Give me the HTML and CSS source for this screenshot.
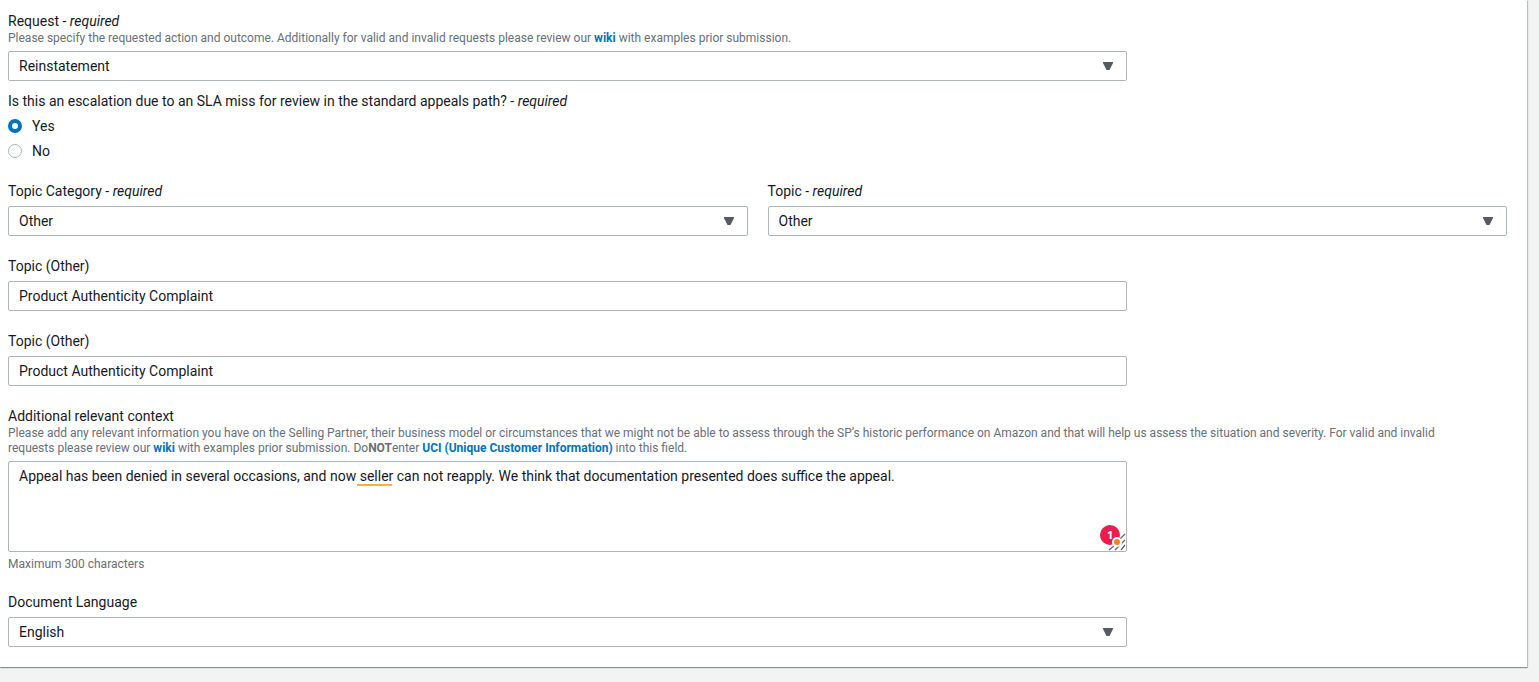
FILE: index.html
```html
<!DOCTYPE html>
<html lang="en">
<head>
<meta charset="utf-8">
<title>Appeal escalation request</title>
<link rel="stylesheet" href="styles.css">
</head>
<body>
<main class="panel">
<form class="form">
  <div class="field">
    <label class="label" for="request">Request - <em>required</em></label>
    <p class="hint">Please specify the requested action and outcome. Additionally for valid and invalid requests please review our <a href="#wiki">wiki</a> with examples prior submission.</p>
    <div class="control narrow">
      <select class="box" id="request"><option>Reinstatement</option></select>
      <svg class="arrow" viewBox="0 0 12 10" aria-hidden="true"><path d="M1 1h10v1L7.5 9h-3L1 2z"/></svg>
    </div>
  </div>

  <fieldset class="choices">
    <legend class="label">Is this an escalation due to an SLA miss for review in the standard appeals path? - <em>required</em></legend>
    <label class="choice"><input type="radio" name="sla" checked>Yes</label>
    <label class="choice"><input type="radio" name="sla">No</label>
  </fieldset>

  <div class="columns">
    <div class="field">
      <label class="label" for="category">Topic Category - <em>required</em></label>
      <div class="control">
        <select class="box" id="category"><option>Other</option></select>
        <svg class="arrow" viewBox="0 0 12 10" aria-hidden="true"><path d="M1 1h10v1L7.5 9h-3L1 2z"/></svg>
      </div>
    </div>
    <div class="field">
      <label class="label" for="topic">Topic - <em>required</em></label>
      <div class="control">
        <select class="box" id="topic"><option>Other</option></select>
        <svg class="arrow" viewBox="0 0 12 10" aria-hidden="true"><path d="M1 1h10v1L7.5 9h-3L1 2z"/></svg>
      </div>
    </div>
  </div>

  <div class="field">
    <label class="label" for="other-category">Topic (Other)</label>
    <div class="control narrow"><input class="box" id="other-category" type="text" value="Product Authenticity Complaint"></div>
  </div>

  <div class="field">
    <label class="label" for="other-topic">Topic (Other)</label>
    <div class="control narrow"><input class="box" id="other-topic" type="text" value="Product Authenticity Complaint"></div>
  </div>

  <div class="field">
    <label class="label" for="context">Additional relevant context</label>
    <p class="hint">Please add any relevant information you have on the Selling Partner, their business model or circumstances that we might not be able to assess through the SP’s historic performance on Amazon and that will help us assess the situation and severity. For valid and invalid requests please review our <a href="#wiki">wiki</a> with examples prior submission. Do<b>NOT</b>enter <a href="#uci">UCI (Unique Customer Information)</a> into this field.</p>
    <div class="control narrow">
      <textarea class="box area" id="context" spellcheck="false">Appeal has been denied in several occasions, and now seller can not reapply. We think that documentation presented does suffice the appeal.</textarea>
      <span class="flagged-word"></span>
      <svg class="grip" viewBox="0 0 18 18" aria-hidden="true"><path d="M1 17l5-4M7 17l4-4M13 17l4-5M12 6l5-5M13 11l4-4"/></svg>
      <button class="checker" type="button" aria-label="1 writing suggestion">1<span class="checker-dot"></span></button>
    </div>
    <p class="hint constraint">Maximum 300 characters</p>
  </div>

  <div class="field">
    <label class="label" for="language">Document Language</label>
    <div class="control narrow">
      <select class="box" id="language"><option>English</option></select>
      <svg class="arrow" viewBox="0 0 12 10" aria-hidden="true"><path d="M1 1h10v1L7.5 9h-3L1 2z"/></svg>
    </div>
  </div>
</form>
</main>
</body>
</html>
```
FILE: styles.css
```css
* { box-sizing: border-box; }

body {
  margin: 0;
  padding: 0 12px 14px 0;
  background: #f2f3f3;
  color: #16191f;
  font: 14px/20px Roboto, "Noto Sans", sans-serif;
}

.panel {
  padding: 11px 20px 20px 8px;
  background: #fff;
  box-shadow: 0 1px 1px rgba(0, 28, 36, 0.3), 1px 1px 1px rgba(0, 28, 36, 0.2);
}

.form {
  display: flex;
  flex-direction: column;
  gap: 20px;
}

.field { min-width: 0; }

.label {
  display: block;
  padding: 0;
}

.hint {
  margin: 0;
  padding-right: 40px;
  color: #687078;
  font-size: 12px;
  line-height: 15px;
}

.hint a {
  color: #0073bb;
  font-weight: 700;
  text-decoration: none;
}

.control {
  position: relative;
  margin-top: 5px;
}

.narrow { width: calc(75% - 5px); }

.box {
  display: block;
  width: 100%;
  height: 30px;
  margin: 0;
  padding: 4px 10px;
  border: 1px solid #aab7b8;
  border-radius: 2px;
  background: #fff;
  color: inherit;
  font: inherit;
  appearance: none;
}

.area {
  height: 91px;
  resize: none;
}

.arrow {
  position: absolute;
  top: 10px;
  right: 13px;
  width: 12px;
  height: 10px;
  fill: #545b64;
  pointer-events: none;
}

.choices {
  display: flex;
  flex-direction: column;
  gap: 5px;
  margin: -10px 0 0;
  padding: 5px 0 0;
  border: 0;
}

.choice {
  display: flex;
  align-items: center;
  gap: 10px;
}

.choice input {
  width: 14px;
  height: 14px;
  margin: 0;
  border: 1px solid #aab7b8;
  border-radius: 50%;
  background: #fff;
  appearance: none;
}

.choice input:checked { border: 4px solid #0073bb; }

.columns {
  display: grid;
  grid-template-columns: 1fr 1fr;
  gap: 20px;
}

.flagged-word {
  position: absolute;
  top: 23px;
  left: 349px;
  width: 35px;
  height: 2px;
  background: #f5b041;
}

.grip {
  position: absolute;
  right: 1px;
  bottom: 1px;
  width: 18px;
  height: 18px;
  stroke: #666;
  stroke-width: 1.3;
  pointer-events: none;
}

.checker {
  position: absolute;
  right: 7px;
  bottom: 7px;
  width: 20px;
  height: 20px;
  padding: 0;
  border: 0;
  border-radius: 50%;
  background: #eb1c4e;
  color: #fff;
  font: 700 11px/20px "Noto Sans", sans-serif;
}

.checker-dot {
  position: absolute;
  right: -2px;
  bottom: -2px;
  width: 10px;
  height: 10px;
  border: 2px solid #fff;
  border-radius: 50%;
  background: #f58220;
}

.constraint { margin-top: 5px; }
```
